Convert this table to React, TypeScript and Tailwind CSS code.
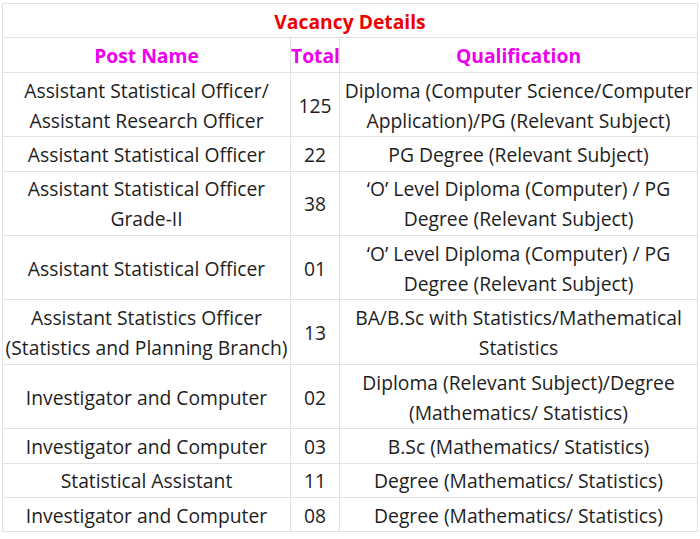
import React from "react";

const rows: { post: React.ReactNode; total: string; qual: React.ReactNode }[] = [
  {
    post: (<>Assistant Statistical Officer/<br />Assistant Research Officer</>),
    total: "125",
    qual: (<>Diploma (Computer Science/Computer<br />Application)/PG (Relevant Subject)</>),
  },
  { post: "Assistant Statistical Officer", total: "22", qual: "PG Degree (Relevant Subject)" },
  {
    post: (<>Assistant Statistical Officer<br />Grade-II</>),
    total: "38",
    qual: (<>‘O’ Level Diploma (Computer) / PG<br />Degree (Relevant Subject)</>),
  },
  {
    post: "Assistant Statistical Officer",
    total: "01",
    qual: (<>‘O’ Level Diploma (Computer) / PG<br />Degree (Relevant Subject)</>),
  },
  {
    post: (<>Assistant Statistics Officer<br />(Statistics and Planning Branch)</>),
    total: "13",
    qual: (<>BA/B.Sc with Statistics/Mathematical<br />Statistics</>),
  },
  {
    post: "Investigator and Computer",
    total: "02",
    qual: (<>Diploma (Relevant Subject)/Degree<br />(Mathematics/ Statistics)</>),
  },
  { post: "Investigator and Computer", total: "03", qual: "B.Sc (Mathematics/ Statistics)" },
  { post: "Statistical Assistant", total: "11", qual: "Degree (Mathematics/ Statistics)" },
  { post: "Investigator and Computer", total: "08", qual: "Degree (Mathematics/ Statistics)" },
];

export default function App() {
  return (
    <div
      className="w-[700px] h-[539px] bg-white pl-[2px] pt-[3px]"
      style={{ fontFamily: '"Open Sans", "Noto Sans", sans-serif' }}
    >
      <table className="table-fixed border-collapse w-[695px] text-[19.3px] leading-[30px] text-[#1e1e1e]">
        <colgroup>
          <col className="w-[288px]" />
          <col className="w-[49px]" />
          <col className="w-[358px]" />
        </colgroup>
        <tbody>
          <tr>
            <td colSpan={3} className="border border-[#e2e2e2] text-center font-bold text-[#ee0000] pt-[2.8px] pb-[0.6px]">
              Vacancy Details
            </td>
          </tr>
          <tr>
            <td className="border border-[#e2e2e2] text-center font-bold text-[#ee00ee] pt-[2.8px] pb-[0.6px]">Post Name</td>
            <td className="border border-[#e2e2e2] text-center font-bold text-[#ee00ee] pt-[2.8px] pb-[0.6px]">Total</td>
            <td className="border border-[#e2e2e2] text-center font-bold text-[#ee00ee] pt-[2.8px] pb-[0.6px]">Qualification</td>
          </tr>
          {rows.map((r, i) => (
            <tr key={i}>
              <td className="border border-[#e2e2e2] text-center whitespace-nowrap pt-[2.8px] pb-[0.6px]">{r.post}</td>
              <td className="border border-[#e2e2e2] text-center whitespace-nowrap pt-[2.8px] pb-[0.6px]">{r.total}</td>
              <td className="border border-[#e2e2e2] text-center whitespace-nowrap pt-[2.8px] pb-[0.6px]">{r.qual}</td>
            </tr>
          ))}
        </tbody>
      </table>
    </div>
  );
}
